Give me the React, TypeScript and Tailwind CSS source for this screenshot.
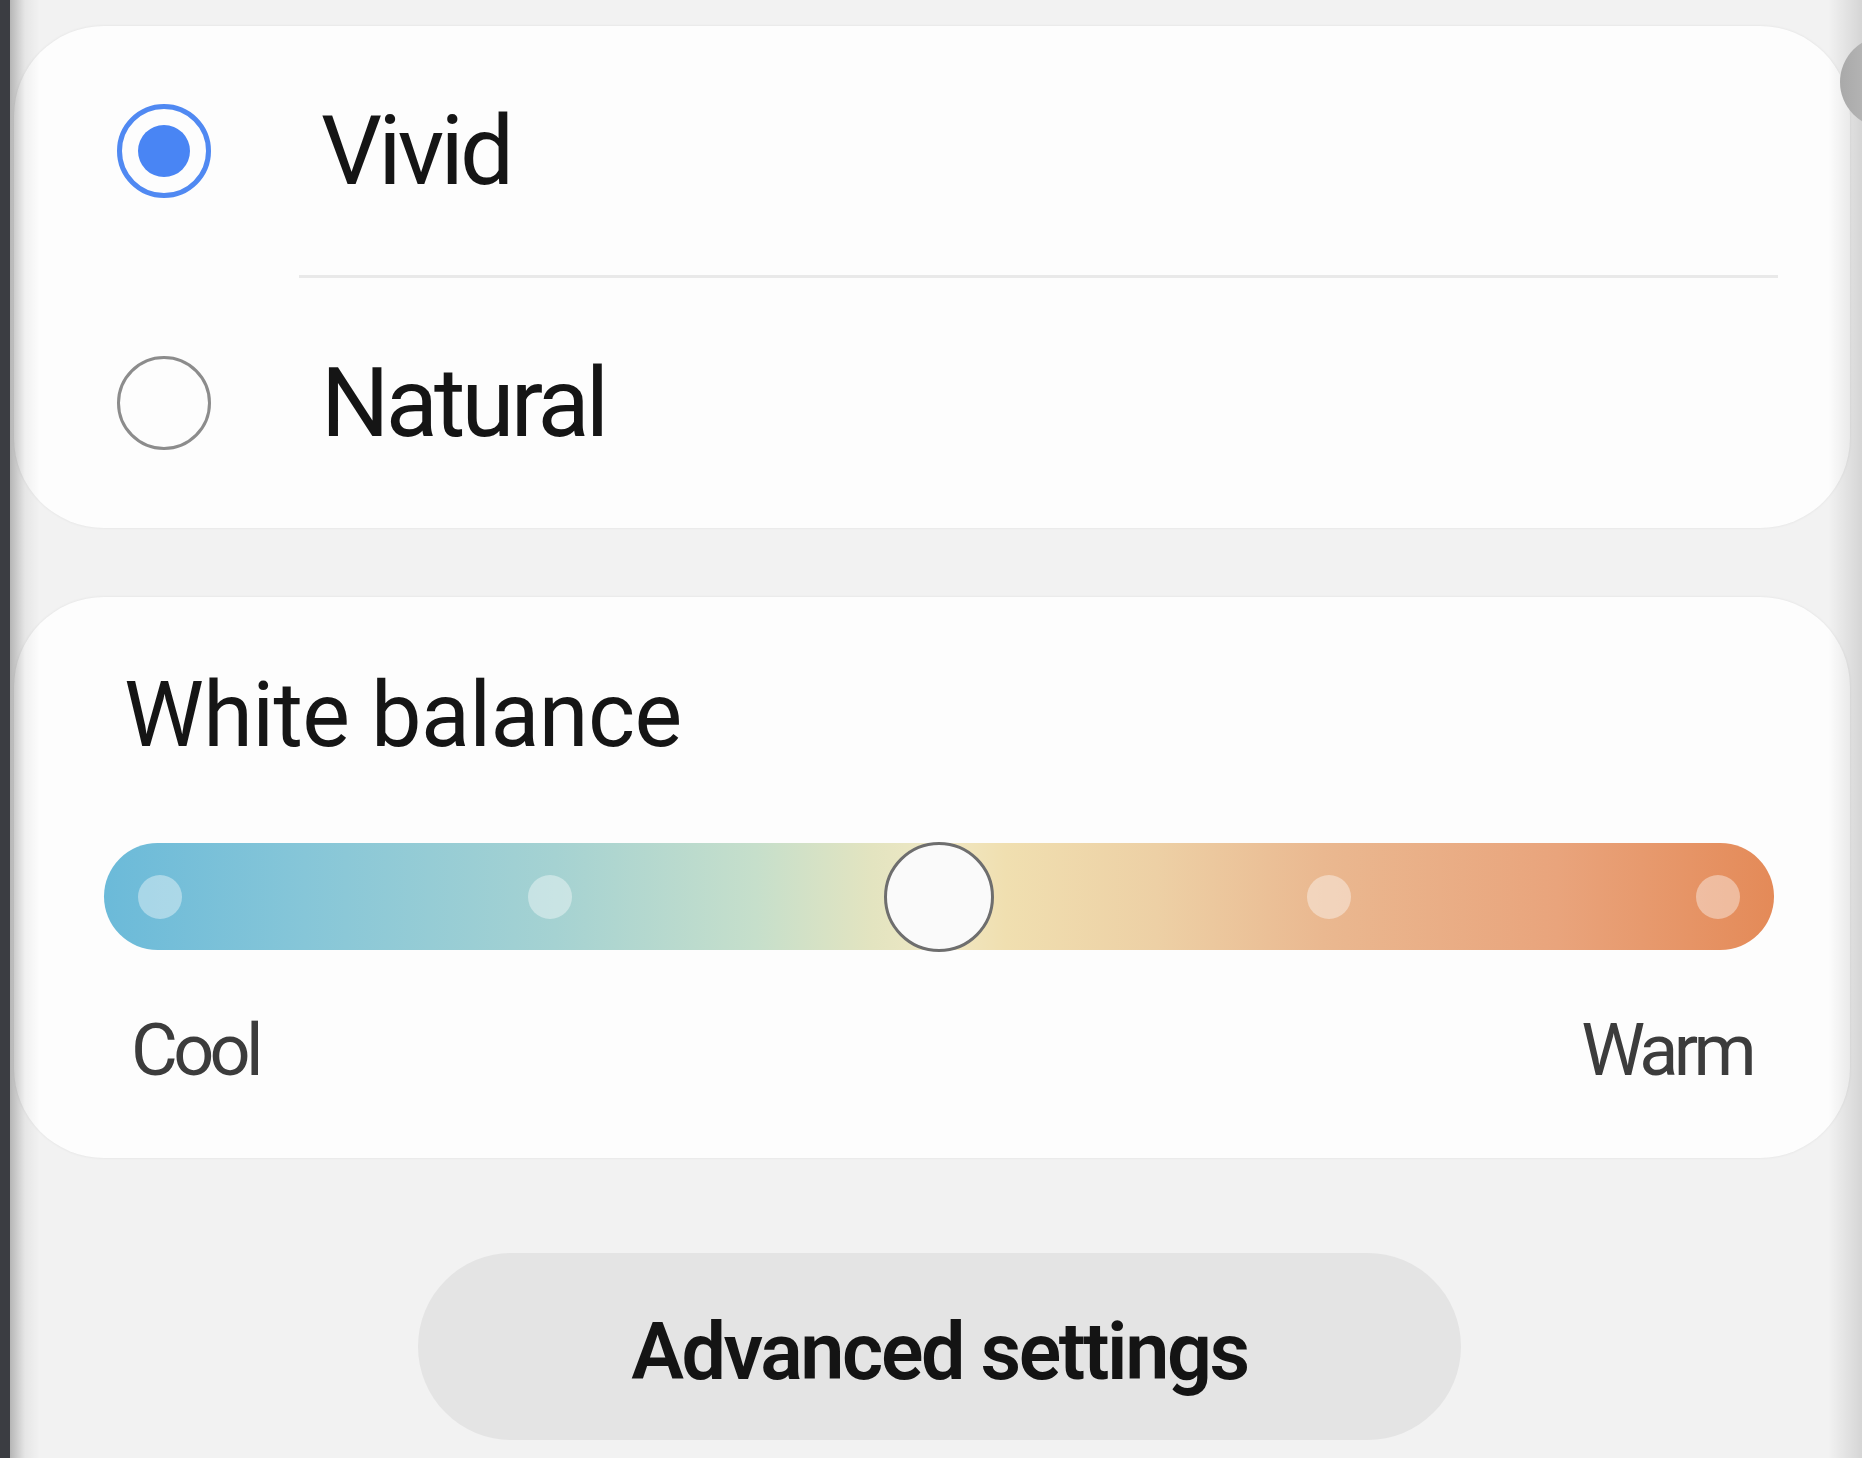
import React from "react";

const Radio: React.FC<{ checked?: boolean }> = ({ checked }) => {
    if (checked) {
        return (
            <div className="w-[94px] h-[94px] shrink-0 rounded-full border-[5px] border-[#5089f2] flex items-center justify-center">
                <div className="w-[52px] h-[52px] rounded-full bg-[#4985f4]" />
            </div>
        );
    }
    return <div className="w-[94px] h-[94px] shrink-0 rounded-full border-[3px] border-[#8c8c8c]" />;
};

const Dot: React.FC = () => <div className="w-[44px] h-[44px] shrink-0 rounded-full bg-white/40" />;

const App: React.FC = () => {
    return (
        <div className="relative w-[1862px] h-[1458px] overflow-hidden bg-[#f2f2f2] flex font-['Roboto','Noto_Sans',sans-serif] text-[#151515]">
            <div className="w-[10px] shrink-0 bg-[#3b3d42]" />

            <div className="flex-1 flex flex-col pl-[4px] pr-[12px] pt-[26px]">
                {/* screen mode */}
                <div className="h-[502px] flex flex-col rounded-[90px] bg-[#fdfdfd] shadow-[0_0_3px_rgba(0,0,0,0.08)]">
                    <div className="h-[249px] flex items-center pl-[103px]">
                        <Radio checked />
                        <span className="ml-[110px] text-[96px] leading-none tracking-[-0.04em]">Vivid</span>
                    </div>
                    <div className="h-[3px] bg-[#e9e9e9] ml-[285px] mr-[72px]" />
                    <div className="h-[250px] flex items-center pl-[103px]">
                        <Radio />
                        <span className="ml-[110px] text-[96px] leading-none tracking-[-0.04em]">Natural</span>
                    </div>
                </div>

                {/* white balance */}
                <div className="mt-[69px] h-[561px] flex flex-col rounded-[90px] bg-[#fdfdfd] shadow-[0_0_3px_rgba(0,0,0,0.08)]">
                    <div className="pt-[74px] pl-[110px] text-[90px] leading-none tracking-[-0.007em]">White balance</div>
                    <div className="mt-[82px] ml-[90px] mr-[76px] h-[107px] rounded-full px-[34px] flex items-center justify-between bg-[linear-gradient(to_right,#6bbad9_0%,#86c6d8_12%,#a5d2d2_27%,#c6dfcb_39%,#e3e4c0_46%,#f0e8c4_50%,#f0dfb0_54%,#edd0a5_63%,#eab890_73%,#e9a47c_87%,#e48a58_100%)]">
                        <Dot />
                        <Dot />
                        <div className="w-[44px] h-[44px] shrink-0 flex items-center justify-center">
                            <div className="w-[110px] h-[110px] shrink-0 rounded-full border-[3px] border-[#6e6e6e] bg-[#fafafa]" />
                        </div>
                        <Dot />
                        <Dot />
                    </div>
                    <div className="mt-[65px] pl-[117px] pr-[98px] flex justify-between text-[72px] leading-none tracking-[-0.065em] text-[#3c3c3c]">
                        <span>Cool</span>
                        <span>Warm</span>
                    </div>
                </div>

                <button className="mt-[95px] ml-[404px] w-[1043px] h-[187px] pt-[12px] rounded-full bg-[#e4e4e4] flex items-center justify-center text-[79px] font-semibold leading-none tracking-[-0.03em] text-[#141414]">
                    Advanced settings
                </button>
            </div>

            {/* curved phone edges */}
            <div className="absolute left-[10px] top-0 h-full w-[30px] bg-gradient-to-r from-black/25 via-black/5 to-transparent pointer-events-none" />
            <div className="absolute right-0 top-0 h-full w-[34px] bg-gradient-to-r from-transparent to-black/12 pointer-events-none" />
            <div className="absolute left-[1840px] top-[36px] w-[92px] h-[92px] rounded-full bg-gradient-to-r from-[#a9a9a9] to-[#d2d2d2]" />
        </div>
    );
};

export default App;
